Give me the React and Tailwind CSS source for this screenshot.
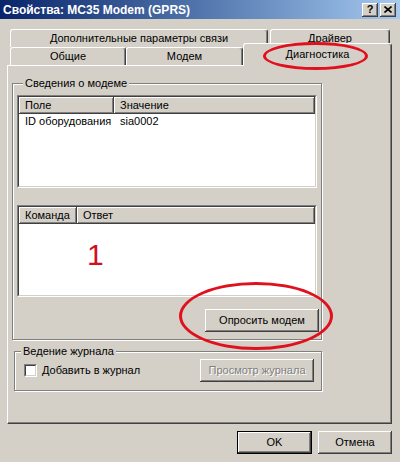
import React from "react";

const raised =
  "bg-[#d4d0c8] shadow-[inset_-1px_-1px_#404040,inset_1px_1px_#ffffff,inset_-2px_-2px_#808080,inset_2px_2px_#d4d0c8]";

const Button = ({ children, className = "", disabled = false }) => (
  <div
    className={`${raised} h-[23px] flex items-center justify-center ${
      disabled ? "text-[#808080] [text-shadow:1px_1px_0_#ffffff]" : ""
    } ${className}`}
  >
    {children}
  </div>
);

const HeaderCell = ({ children, className = "" }) => (
  <div
    className={`h-full pl-[6px] leading-[16px] bg-[#d4d0c8] shadow-[inset_-1px_-1px_#404040,inset_1px_1px_#ffffff,inset_-2px_-2px_#808080] ${className}`}
  >
    {children}
  </div>
);

const ListBox = ({ height, children }) => (
  <div
    className={`border border-t-[#808080] border-l-[#808080] border-r-white border-b-white ${height}`}
  >
    <div className="h-full border border-t-[#404040] border-l-[#404040] border-r-[#d4d0c8] border-b-[#d4d0c8] bg-white overflow-hidden">
      {children}
    </div>
  </div>
);

const Group = ({ title, className = "", children }) => (
  <fieldset
    className={`border border-[#808080] shadow-[1px_1px_0_#ffffff,inset_1px_1px_0_#ffffff] ${className}`}
  >
    <legend className="ml-[6px] px-[2px] bg-[#d4d0c8] leading-[13px]">{title}</legend>
    {children}
  </fieldset>
);

const backTab =
  "h-[18px] border-t border-l border-white border-r border-r-[#404040] rounded-t-[3px] shadow-[inset_-1px_0_#808080] text-center leading-[16px]";

export default function App() {
  return (
    <div className="relative w-[400px] h-[462px] overflow-hidden bg-[#d4d0c8] text-black text-[11px] font-['Liberation_Sans',Arial,sans-serif]">
      {/* заголовок окна */}
      <div className="h-[19px] flex items-center justify-between pl-[3px] pr-[4px] bg-linear-to-r from-[#0a246a] to-[#a6caf0]">
        <span className="text-white font-bold text-[12px]">Свойства: MC35 Modem (GPRS)</span>
        <div className="flex gap-[2px]">
          <div className={`${raised} w-[16px] h-[14px] flex items-center justify-center font-bold text-[11px] leading-none`}>
            ?
          </div>
          <div className={`${raised} w-[16px] h-[14px] flex items-center justify-center`}>
            <svg width="8" height="7" viewBox="0 0 8 7">
              <path d="M0.5 0.5L7.5 6.5M7.5 0.5L0.5 6.5" stroke="#000" strokeWidth="1.6" />
            </svg>
          </div>
        </div>
      </div>

      <div className="pl-[7px] pr-[8px]">
        {/* вкладки */}
        <div className="mt-[10px] ml-[3px] flex gap-[2px]">
          <div className={`${backTab} w-[258px]`}>Дополнительные параметры связи</div>
          <div className={`${backTab} w-[120px]`}>Драйвер</div>
        </div>
        <div className="ml-[3px] h-[18px] flex items-end">
          <div className={`${backTab} w-[116px]`}>Общие</div>
          <div className={`${backTab} w-[117px]`}>Модем</div>
          <div className="relative z-10 w-[149px] h-[23px] -mb-[1px] bg-[#d4d0c8] border-t border-l border-white border-r border-r-[#404040] rounded-t-[3px] shadow-[inset_-1px_0_#808080] text-center leading-[20px]">
            Диагностика
          </div>
        </div>

        {/* панель */}
        <div className="h-[359px] border-t border-l border-white border-r border-b border-r-[#404040] border-b-[#404040] shadow-[inset_-1px_-1px_#808080]">
          <Group title="Сведения о модеме" className="mt-[11px] ml-[4px] w-[310px] px-[4px] pb-[7px]">
            <div className="mt-[5px]">
              <ListBox height="h-[93px]">
                <div className="flex h-[17px]">
                  <HeaderCell className="w-[95px]">Поле</HeaderCell>
                  <HeaderCell className="flex-1">Значение</HeaderCell>
                </div>
                <div className="flex h-[15px] leading-[15px]">
                  <div className="w-[95px] pl-[6px]">ID оборудования</div>
                  <div className="pl-[6px]">sia0002</div>
                </div>
              </ListBox>
            </div>
            <div className="mt-[17px]">
              <ListBox height="h-[92px]">
                <div className="flex h-[17px]">
                  <HeaderCell className="w-[58px]">Команда</HeaderCell>
                  <HeaderCell className="flex-1">Ответ</HeaderCell>
                </div>
                <div className="pl-[68px] pt-[16px] text-[30px] leading-none text-[#d0101c]">1</div>
              </ListBox>
            </div>
            <div className="mt-[12px] flex justify-end -mr-[2px]">
              <Button className="w-[114px]">Опросить модем</Button>
            </div>
          </Group>

          <Group title="Ведение журнала" className="mt-[5px] ml-[6px] w-[308px] pb-[8px]">
            <div className="mt-[1px] flex items-center h-[23px]">
              <div className="ml-[9px] w-[13px] h-[13px] border border-t-[#808080] border-l-[#808080] border-r-white border-b-white">
                <div className="h-full border border-t-[#404040] border-l-[#404040] border-r-[#d4d0c8] border-b-[#d4d0c8] bg-white" />
              </div>
              <span className="ml-[5px]">Добавить в журнал</span>
              <Button disabled className="ml-auto mr-[7px] w-[114px]">
                Просмотр журнала
              </Button>
            </div>
          </Group>
        </div>

        {/* кнопки диалога */}
        <div className="mt-[7px] flex justify-end gap-[6px]">
          <div className="w-[75px] h-[23px] border border-black">
            <Button className="h-full">OK</Button>
          </div>
          <Button className="w-[74px]">Отмена</Button>
        </div>
      </div>

      {/* красные пометки */}
      <div className="absolute z-20 left-[263px] top-[42px] w-[105px] h-[28px] rounded-[50%] border-[3px] border-[#e0101e]" />
      <div className="absolute z-20 left-[179px] top-[282px] w-[154px] h-[68px] rounded-[50%] border-[3px] border-[#e0101e]" />
    </div>
  );
}
